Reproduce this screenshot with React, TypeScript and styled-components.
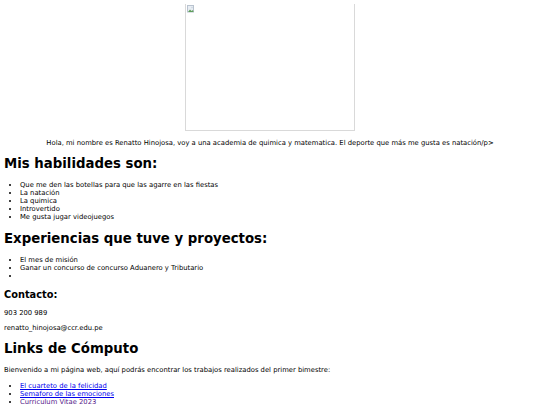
import React from "react";
import styled, { createGlobalStyle } from "styled-components";

const Global = createGlobalStyle`
  html, body { background: #fff; }
  body {
    margin: 4px;
    font-family: "DejaVu Sans", Verdana, sans-serif;
    font-size: 6.8px;
    line-height: 8px;
    color: #000;
  }
`;

const Center = styled.div`
  display: flex;
  flex-direction: column;
  align-items: center;
`;

const BrokenImage = styled.div`
  box-sizing: border-box;
  width: 170px;
  height: 128px;
  margin-top: -1px;
  border: 1px solid #d9d9d9;
  padding: 1px;
`;

const Intro = styled.p`
  margin: 8px 0 0;
  text-align: center;
`;

const Title = styled.h1<{ $size: number; $top: number; $bottom: number }>`
  font-size: ${(p) => p.$size}px;
  line-height: ${(p) => Math.round(p.$size * 1.2)}px;
  font-weight: bold;
  margin: ${(p) => p.$top}px 0 ${(p) => p.$bottom}px;
`;

const List = styled.ul<{ $top?: number }>`
  margin: ${(p) => p.$top ?? 0}px 0 0;
  padding-left: 16px;
  list-style: disc;
`;

const Text = styled.p<{ $top?: number }>`
  margin: ${(p) => p.$top ?? 7}px 0 0;
`;

const Link = styled.a<{ $visited?: boolean }>`
  color: ${(p) => (p.$visited ? "#551a8b" : "#0000ee")};
  text-decoration: underline;
`;

function BrokenIcon() {
  return (
    <svg width="8" height="8" viewBox="0 0 8 8">
      <rect x="0.5" y="0.5" width="6" height="6.5" fill="#e8edf3" stroke="#b9c3cf" />
      <path d="M1 7 L3 4.5 L4.5 6 L6 5 L6.5 7 Z" fill="#5f9f5a" />
      <circle cx="5" cy="2.5" r="0.8" fill="#c9d4de" />
    </svg>
  );
}

export default function App() {
  return (
    <>
      <Global />
      <Center>
        <BrokenImage>
          <BrokenIcon />
        </BrokenImage>
        <Intro>
          Hola, mi nombre es Renatto Hinojosa, voy a una academia de quimica y matematica. El
          deporte que más me gusta es natación/p&gt;
        </Intro>
      </Center>
      <Title $size={13.3} $top={9} $bottom={9}>Mis habilidades son:</Title>
      <List>
        <li>Que me den las botellas para que las agarre en las fiestas</li>
        <li>La natación</li>
        <li>La quimica</li>
        <li>Introvertido</li>
        <li>Me gusta jugar videojuegos</li>
      </List>
      <Title as="h2" $size={13.3} $top={10} $bottom={9}>Experiencias que tuve y proyectos:</Title>
      <List>
        <li>El mes de misión</li>
        <li>Ganar un concurso de concurso Aduanero y Tributario</li>
        <li></li>
      </List>
      <Title as="h3" $size={9.8} $top={9} $bottom={0}>Contacto:</Title>
      <Text $top={8}>903 200 989</Text>
      <Text $top={7}>renatto_hinojosa@ccr.edu.pe</Text>
      <Title $size={13.3} $top={9} $bottom={0}>Links de Cómputo</Title>
      <Text $top={9}>
        Bienvenido a mi página web, aquí podrás encontrar los trabajos realizados del primer
        bimestre:
      </Text>
      <List $top={8}>
        <li><Link href="#">El cuarteto de la felicidad</Link></li>
        <li><Link href="#">Semaforo de las emociones</Link></li>
        <li><Link href="#" $visited>Curriculum Vitae 2023</Link></li>
      </List>
    </>
  );
}
